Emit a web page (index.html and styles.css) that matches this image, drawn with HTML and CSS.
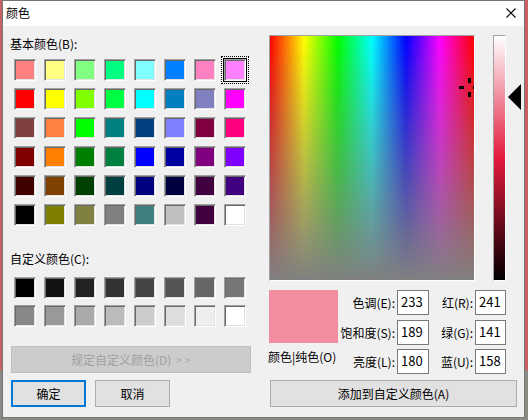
FILE: index.html
```html
<!DOCTYPE html>
<html lang="zh-CN">
<head>
<meta charset="utf-8">
<title>颜色</title>
<link rel="stylesheet" href="styles.css">
</head>
<body>
<div class="window">
  <div class="titlebar">
    <span class="title">颜色</span>
    <svg class="close" width="10" height="10" viewBox="0 0 10 10"><path d="M0.5 0.5 L9.5 9.5 M9.5 0.5 L0.5 9.5" stroke="#000" stroke-width="1.1" fill="none"/></svg>
  </div>
  <div class="content">
    <div class="left">
      <div class="label basic-label">基本颜色(B):</div>
      <div class="swatches basic">
        <span class="sw" style="background:#ff8080"></span>
        <span class="sw" style="background:#ffff80"></span>
        <span class="sw" style="background:#80ff80"></span>
        <span class="sw" style="background:#00ff80"></span>
        <span class="sw" style="background:#80ffff"></span>
        <span class="sw" style="background:#0080ff"></span>
        <span class="sw" style="background:#ff80c0"></span>
        <span class="sw selected" style="background:#ff80ff"></span>

        <span class="sw" style="background:#ff0000"></span>
        <span class="sw" style="background:#ffff00"></span>
        <span class="sw" style="background:#80ff00"></span>
        <span class="sw" style="background:#00ff40"></span>
        <span class="sw" style="background:#00ffff"></span>
        <span class="sw" style="background:#0080c0"></span>
        <span class="sw" style="background:#8080c0"></span>
        <span class="sw" style="background:#ff00ff"></span>

        <span class="sw" style="background:#804040"></span>
        <span class="sw" style="background:#ff8040"></span>
        <span class="sw" style="background:#00ff00"></span>
        <span class="sw" style="background:#008080"></span>
        <span class="sw" style="background:#004080"></span>
        <span class="sw" style="background:#8080ff"></span>
        <span class="sw" style="background:#800040"></span>
        <span class="sw" style="background:#ff0080"></span>

        <span class="sw" style="background:#800000"></span>
        <span class="sw" style="background:#ff8000"></span>
        <span class="sw" style="background:#008000"></span>
        <span class="sw" style="background:#008040"></span>
        <span class="sw" style="background:#0000ff"></span>
        <span class="sw" style="background:#0000a0"></span>
        <span class="sw" style="background:#800080"></span>
        <span class="sw" style="background:#8000ff"></span>

        <span class="sw" style="background:#400000"></span>
        <span class="sw" style="background:#804000"></span>
        <span class="sw" style="background:#004000"></span>
        <span class="sw" style="background:#004040"></span>
        <span class="sw" style="background:#000080"></span>
        <span class="sw" style="background:#000040"></span>
        <span class="sw" style="background:#400040"></span>
        <span class="sw" style="background:#400080"></span>

        <span class="sw" style="background:#000000"></span>
        <span class="sw" style="background:#808000"></span>
        <span class="sw" style="background:#808040"></span>
        <span class="sw" style="background:#808080"></span>
        <span class="sw" style="background:#408080"></span>
        <span class="sw" style="background:#c0c0c0"></span>
        <span class="sw" style="background:#400040"></span>
        <span class="sw" style="background:#ffffff"></span>
      </div>
      <div class="label custom-label">自定义颜色(C):</div>
      <div class="swatches custom">
        <span class="sw" style="background:#000000"></span>
        <span class="sw" style="background:#131313"></span>
        <span class="sw" style="background:#222222"></span>
        <span class="sw" style="background:#333333"></span>
        <span class="sw" style="background:#444444"></span>
        <span class="sw" style="background:#555555"></span>
        <span class="sw" style="background:#666666"></span>
        <span class="sw" style="background:#777777"></span>
        <span class="sw" style="background:#888888"></span>
        <span class="sw" style="background:#999999"></span>
        <span class="sw" style="background:#aaaaaa"></span>
        <span class="sw" style="background:#bbbbbb"></span>
        <span class="sw" style="background:#cccccc"></span>
        <span class="sw" style="background:#dddddd"></span>
        <span class="sw" style="background:#eeeeee"></span>
        <span class="sw" style="background:#ffffff"></span>
      </div>
      <div class="btn disabled define">规定自定义颜色(D)<span class="chev">&gt; &gt;</span></div>
      <div class="btn-row">
        <div class="btn default">确定</div>
        <div class="btn">取消</div>
      </div>
    </div>
    <div class="right">
      <div class="picker-row">
        <div class="spectrum">
          <svg class="cross" width="20" height="21" viewBox="0 0 20 21">
            <rect x="9" y="0" width="3" height="5" fill="#000"/>
            <rect x="9" y="14" width="3" height="5" fill="#000"/>
            <rect x="0" y="8" width="5" height="3" fill="#000"/>
            <rect x="14" y="8" width="5" height="3" fill="#000"/>
          </svg>
        </div>
        <div class="lumbar"></div>
        <div class="arrow"></div>
      </div>
      <div class="values">
        <div class="preview-col">
          <div class="preview"></div>
          <div class="label preview-label">颜色|纯色(O)</div>
        </div>
        <div class="fields">
          <span class="flabel">色调(E):</span><span class="input">233</span>
          <span class="flabel f2">红(R):</span><span class="input">241</span>
          <span class="flabel">饱和度(S):</span><span class="input">189</span>
          <span class="flabel f2">绿(G):</span><span class="input">141</span>
          <span class="flabel">亮度(L):</span><span class="input">180</span>
          <span class="flabel f2">蓝(U):</span><span class="input">158</span>
        </div>
      </div>
      <div class="btn add">添加到自定义颜色(A)</div>
    </div>
  </div>
</div>
</body>
</html>
```

FILE: styles.css
```css
html, body {
  margin: 0;
  padding: 0;
}
body {
  width: 528px;
  height: 420px;
  overflow: hidden;
  background: linear-gradient(#c86262 0, #c86262 370px, #8b8983 370px);
  font-family: "Noto Sans CJK SC", "Noto Sans", sans-serif;
  font-size: 12px;
  line-height: 16px;
  color: #000;
}
.window {
  box-sizing: border-box;
  margin-left: 2px;
  width: 523px;
  height: 418px;
  border: 1px solid #767676;
  background: #f0f0f0;
  display: flex;
  flex-direction: column;
}
.titlebar {
  height: 25px;
  background: #fff;
  display: flex;
  align-items: center;
  justify-content: space-between;
  padding: 0 8px 0 3px;
  flex: none;
}
.title {
  margin-top: -2px;
}
.close {
  display: block;
  margin-top: -1px;
}
.content {
  display: flex;
  flex: 1;
}
.left {
  width: 266px;
  flex: none;
  display: flex;
  flex-direction: column;
  align-items: flex-start;
}
.label {
  height: 16px;
  white-space: nowrap;
}
.basic-label {
  margin: 10px 0 0 7px;
}
.custom-label {
  margin: 25px 0 0 7px;
}
.swatches {
  display: grid;
  grid-template-columns: repeat(8, 22px);
  grid-auto-rows: 22px;
  column-gap: 8px;
  margin-left: 11px;
}
.basic {
  margin-top: 7px;
  row-gap: 7px;
}
.custom {
  margin-top: 10px;
  row-gap: 6px;
}
.sw {
  box-sizing: border-box;
  width: 22px;
  height: 22px;
  border: 1px solid;
  border-color: #a0a0a0 #ffffff #ffffff #a0a0a0;
  box-shadow: inset 1px 1px 0 #696969, inset -1px -1px 0 #e3e3e3;
}
.sw.selected {
  box-shadow: inset 1px 1px 0 #696969, inset -1px -1px 0 #e3e3e3, 0 0 0 1px #000;
  outline: 1px dotted #000;
  outline-offset: 2px;
}
.btn {
  box-sizing: border-box;
  height: 27px;
  background: #e1e1e1;
  border: 1px solid #adadad;
  display: flex;
  align-items: center;
  justify-content: center;
  white-space: nowrap;
}
.define {
  margin: 19px 0 0 8px;
  width: 240px;
}
.chev {
  font-size: 10px;
  margin-left: 5px;
  letter-spacing: 0.5px;
}
.disabled {
  background: #cccccc;
  border-color: #bfbfbf;
  color: #a0a0a0;
}
.btn-row {
  display: flex;
  gap: 9px;
  margin: 7px 0 0 8px;
}
.btn-row .btn {
  width: 75px;
}
.btn.default {
  border: 2px solid #0078d7;
}
.right {
  flex: 1;
  padding-top: 9px;
  display: flex;
  flex-direction: column;
  align-items: flex-start;
}
.picker-row {
  display: flex;
  align-items: flex-start;
}
.spectrum {
  box-sizing: border-box;
  position: relative;
  overflow: hidden;
  width: 206px;
  height: 246px;
  border: 1px solid;
  border-color: #a0a0a0 #ffffff #ffffff #a0a0a0;
  background:
    linear-gradient(to bottom, rgba(128,128,128,0), rgba(128,128,128,1)),
    linear-gradient(to right, #ff0000 0%, #ffff00 16.67%, #00ff00 33.33%, #00ffff 50%, #0000ff 66.67%, #ff00ff 83.33%, #ff0000 100%);
}
.cross {
  position: absolute;
  left: 189px;
  top: 42px;
}
.lumbar {
  box-sizing: border-box;
  width: 13px;
  height: 246px;
  margin-left: 18px;
  border: 1px solid;
  border-color: #a0a0a0 #ffffff #ffffff #a0a0a0;
  background: linear-gradient(to bottom, #ffffff 0%, #e41b3e 50%, #000000 100%);
}
.arrow {
  width: 0;
  height: 0;
  margin: 49px 0 0 2px;
  border-right: 13px solid #000;
  border-top: 13.5px solid transparent;
  border-bottom: 13.5px solid transparent;
}
.values {
  display: flex;
  margin-top: 9px;
}
.preview-col {
  display: flex;
  flex-direction: column;
  width: 69px;
}
.preview {
  width: 69px;
  height: 53px;
  background: #f18d9e;
}
.preview-label {
  margin: 6px 0 0 -1px;
}
.fields {
  display: grid;
  grid-template-columns: 59px 32px 46px 31px;
  grid-auto-rows: 25px;
  row-gap: 4.5px;
}
.flabel {
  text-align: right;
  line-height: 25px;
  padding-right: 2px;
  white-space: nowrap;
}
.input {
  box-sizing: border-box;
  background: #fff;
  border: 1px solid #7a7a7a;
  padding-left: 3px;
  line-height: 22px;
  font-size: 13px;
}
.add {
  margin: 6px 0 0 1px;
  width: 247px;
}
```
